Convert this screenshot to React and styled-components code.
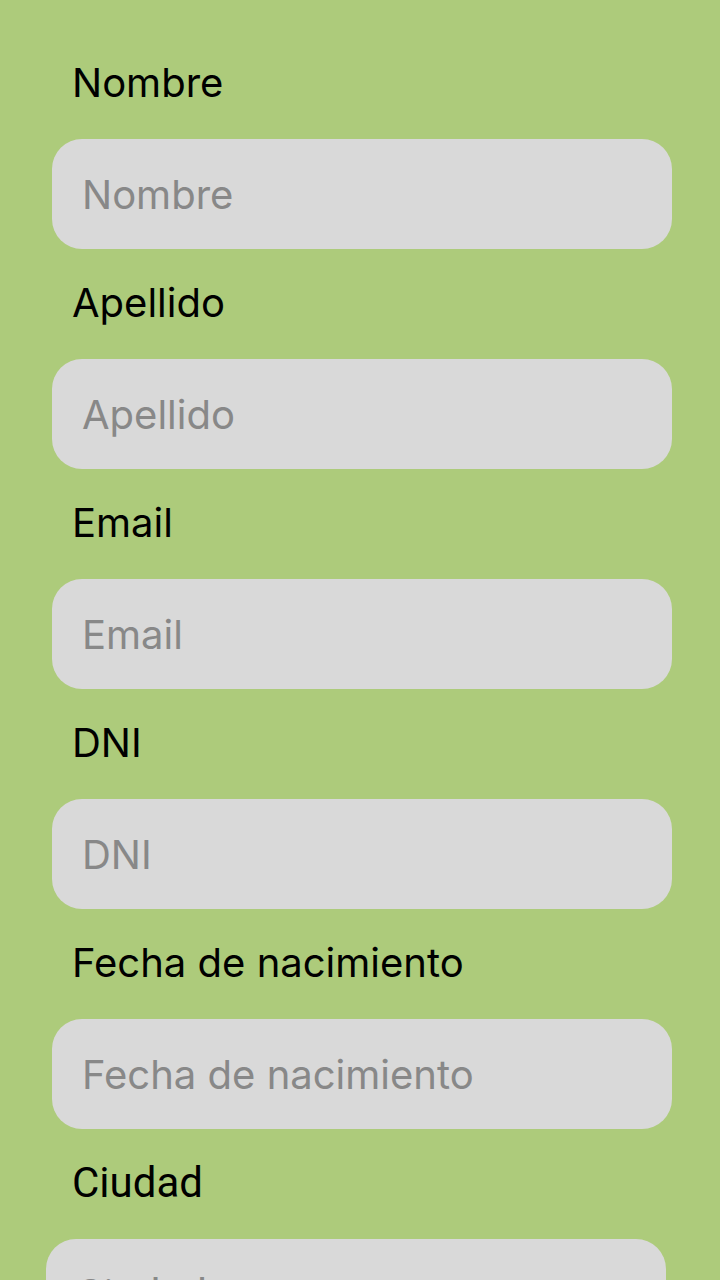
import React from 'react';
import styled, { createGlobalStyle } from 'styled-components';

const GlobalStyle = createGlobalStyle`
  html, body {
    margin: 0;
    padding: 0;
    background: #adcb7b;
  }
  body {
    font-family: Inter, "Noto Sans", sans-serif;
  }
`;

const Page = styled.div`
  width: 720px;
  height: 1280px;
  background: #adcb7b;
  padding-top: 61px;
  box-sizing: border-box;
  overflow: hidden;
`;

const Field = styled.div`
  display: flex;
  flex-direction: column;
  padding-left: ${(p) => (p.$shift ? 46 : 52)}px;
  margin-bottom: 32px;
`;

const Label = styled.label`
  font-family: ${(p) => (p.$alt ? 'Roboto' : 'Inter')}, sans-serif;
  font-size: ${(p) => (p.$alt ? 42 : 40)}px;
  line-height: 44px;
  color: #000;
  margin-left: ${(p) => (p.$shift ? 26 : 20)}px;
  margin-bottom: 34px;
`;

const Input = styled.input`
  width: 620px;
  height: 110px;
  flex-shrink: 0;
  box-sizing: border-box;
  border: none;
  outline: none;
  border-radius: 30px;
  background: #d9d9d9;
  padding: 0 30px;
  font-family: ${(p) => (p.$alt ? 'Roboto' : 'Inter')}, sans-serif;
  font-size: ${(p) => (p.$alt ? 42 : 40)}px;
  color: #000;
  &::placeholder {
    color: #888888;
  }
`;

const fields = ['Nombre', 'Apellido', 'Email', 'DNI', 'Fecha de nacimiento'];

export default function App() {
  return (
    <>
      <GlobalStyle />
      <Page>
        {fields.map((f) => (
          <Field key={f}>
            <Label>{f}</Label>
            <Input placeholder={f} />
          </Field>
        ))}
        <Field $shift>
          <Label $alt $shift>Ciudad</Label>
          <Input $alt placeholder="Ciudad" />
        </Field>
      </Page>
    </>
  );
}
